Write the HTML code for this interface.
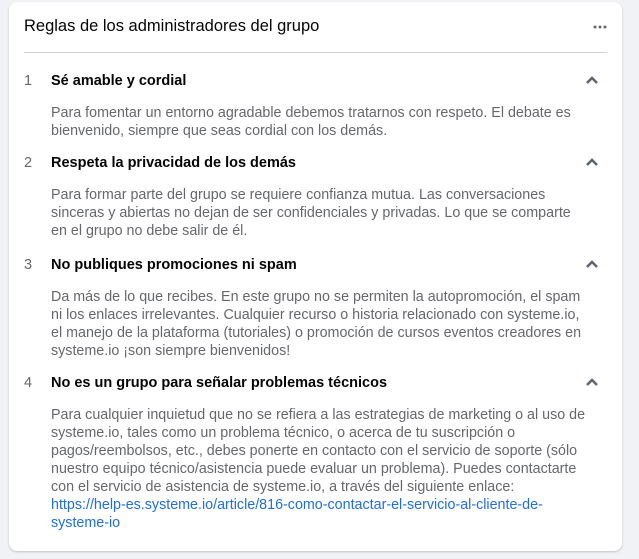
<!DOCTYPE html>
<html><head><meta charset="utf-8"><style>
body{margin:0;background:#f0f2f5;font-family:"Liberation Sans",Arial,sans-serif;width:639px;height:559px;overflow:hidden;position:relative}
.card{position:absolute;left:9px;top:2px;width:613px;height:549px;background:#fff;border-radius:8px;box-shadow:0 1px 2px rgba(0,0,0,.2)}
.t{position:absolute;left:15px;top:15px;font-size:16.5px;color:#050505}
.dots{position:absolute;left:584px;top:23px}
.hr{position:absolute;left:15px;top:50px;width:583px;height:1px;background:#ced0d4}
.r{position:absolute;left:15px;width:583px}
.n{position:absolute;left:0;top:0;font-size:14.5px;color:#65676b}
.h{position:absolute;left:27px;top:0;font-size:14.5px;font-weight:bold;color:#050505}
.c{position:absolute;left:561px;top:2px}
.d{position:absolute;left:27px;top:31px;font-size:14.3px;line-height:18px;color:#65676b;white-space:nowrap}
a{color:#216fdb;text-decoration:none}
</style></head><body>
<div class="card">
<div class="t">Reglas de los administradores del grupo</div>
<svg class="dots" width="14" height="4" viewBox="0 0 14 4"><circle cx="2" cy="2" r="1.5" fill="#65676b"/><circle cx="7" cy="2" r="1.5" fill="#65676b"/><circle cx="12" cy="2" r="1.5" fill="#65676b"/></svg>
<div class="hr"></div>
<div class="r" style="top:71px"><div class="n">1</div><div class="h">Sé amable y cordial</div>
<svg class="c" width="14" height="10" viewBox="0 0 14 10"><path d="M2 8L7 3L12 8" stroke="#606770" stroke-width="2.6" fill="none"/></svg>
<div class="d">Para fomentar un entorno agradable debemos tratarnos con respeto. El debate es<br>bienvenido, siempre que seas cordial con los demás.</div></div>
<div class="r" style="top:153px"><div class="n">2</div><div class="h">Respeta la privacidad de los demás</div>
<svg class="c" width="14" height="10" viewBox="0 0 14 10"><path d="M2 8L7 3L12 8" stroke="#606770" stroke-width="2.6" fill="none"/></svg>
<div class="d">Para formar parte del grupo se requiere confianza mutua. Las conversaciones<br>sinceras y abiertas no dejan de ser confidenciales y privadas. Lo que se comparte<br>en el grupo no debe salir de él.</div></div>
<div class="r" style="top:255px"><div class="n">3</div><div class="h">No publiques promociones ni spam</div>
<svg class="c" width="14" height="10" viewBox="0 0 14 10"><path d="M2 8L7 3L12 8" stroke="#606770" stroke-width="2.6" fill="none"/></svg>
<div class="d">Da más de lo que recibes. En este grupo no se permiten la autopromoción, el spam<br>ni los enlaces irrelevantes. Cualquier recurso o historia relacionado con systeme.io,<br>el manejo de la plataforma (tutoriales) o promoción de cursos eventos creadores en<br>systeme.io ¡son siempre bienvenidos!</div></div>
<div class="r" style="top:373px"><div class="n">4</div><div class="h">No es un grupo para señalar problemas técnicos</div>
<svg class="c" width="14" height="10" viewBox="0 0 14 10"><path d="M2 8L7 3L12 8" stroke="#606770" stroke-width="2.6" fill="none"/></svg>
<div class="d">Para cualquier inquietud que no se refiera a las estrategias de marketing o al uso de<br>systeme.io, tales como un problema técnico, o acerca de tu suscripción o<br>pagos/reembolsos, etc., debes ponerte en contacto con el servicio de soporte (sólo<br>nuestro equipo técnico/asistencia puede evaluar un problema). Puedes contactarte<br>con el servicio de asistencia de systeme.io, a través del siguiente enlace:<br><a>https://help-es.systeme.io/article/816-como-contactar-el-servicio-al-cliente-de-</a><br><a>systeme-io</a></div></div>
</div>
</body></html>
